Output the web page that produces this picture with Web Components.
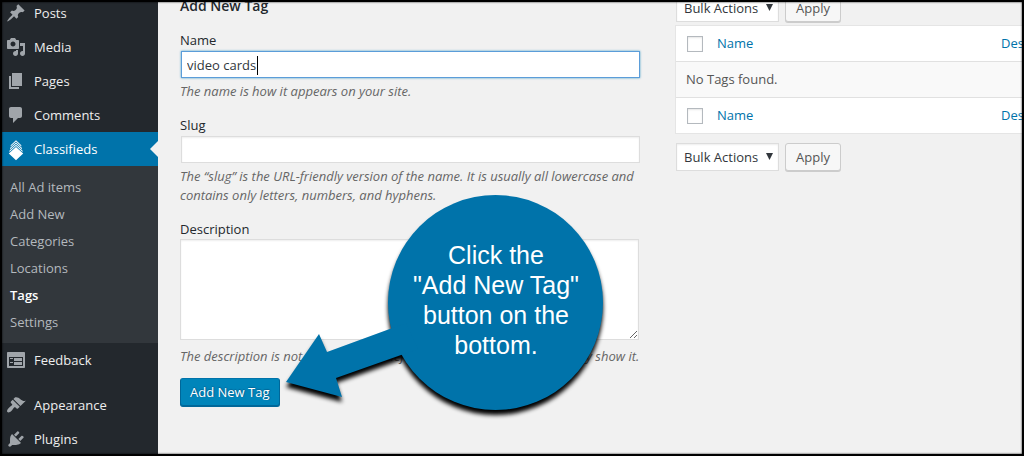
<!DOCTYPE html>
<html lang="en">
<head>
<meta charset="utf-8">
<title>Classifieds Tags</title>
<style>
  body { margin: 0; background: #f1f1f1; color: #444; font: 13px/19px "Open Sans", "Noto Sans", sans-serif; }
</style>
</head>
<body>
<admin-page></admin-page>

<script>
const define = (name, html, setup) => {
  const template = document.createElement('template');
  template.innerHTML = html;
  customElements.define(name, class extends HTMLElement {
    constructor() {
      super();
      this.attachShadow({ mode: 'open' }).append(template.content.cloneNode(true));
    }
    connectedCallback() { if (setup) setup(this, this.shadowRoot); }
  });
};

const ICONS = {
  post: 'M10.44 3.02l1.82-1.82 6.36 6.35-1.83 1.82c-1.05-.68-2.48-.57-3.41.36l-.75.75c-.92.93-1.04 2.35-.35 3.41l-1.83 1.82-2.41-2.41-2.8 2.79c-.42.42-3.38 2.71-3.8 2.29s1.86-3.39 2.28-3.81l2.79-2.79L4.1 9.36l1.83-1.82c1.05.69 2.48.57 3.4-.36l.75-.75c.93-.92 1.05-2.35.36-3.41z',
  media: 'M13 11V4c0-.55-.45-1-1-1h-1.67L9 1H5L3.67 3H2c-.55 0-1 .45-1 1v7c0 .55.45 1 1 1h10c.55 0 1-.45 1-1zM7 4.5c1.38 0 2.5 1.12 2.5 2.5S8.38 9.5 7 9.5 4.5 8.38 4.5 7 5.62 4.5 7 4.5zM14 6h5v10.5c0 1.38-1.12 2.5-2.5 2.5S14 17.88 14 16.5s1.12-2.5 2.5-2.5c.17 0 .34.02.5.05V9h-3V6zM10 14.05V13h2v3.5c0 1.38-1.12 2.5-2.5 2.5S7 17.88 7 16.5 8.12 14 9.5 14c.17 0 .34.02.5.05z',
  page: 'M6 15V2h10v13H6zm-1 1h8v2H3V5h2v11z',
  comments: 'M5 2h9c1.1 0 2 .9 2 2v7c0 1.1-.9 2-2 2h-2l-5 5v-5H5c-1.1 0-2-.9-2-2V4c0-1.1.9-2 2-2z',
  stack: 'M10 8L17.2 14.5 10 21.3 2.8 14.5zM10 5.7L16.6 11.7V12.9L10 7 3.4 12.9V11.7zM10 3.5L16 9V10.2L10 4.8 4 10.2V9zM10 1.3L15.3 6.2V7.4L10 2.6 4.7 7.4V6.2z',
  feedback: 'M2 2h16c.55 0 1 .45 1 1v14c0 .55-.45 1-1 1H2c-.55 0-1-.45-1-1V3c0-.55.45-1 1-1zm15 14V7H3v9h14zM4 8v1h3V8H4zm4 0v3h8V8H8zm-4 4v1h3v-1H4zm4 0v3h8v-3H8z',
  appearance: 'M14.48 11.06L7.41 3.99l1.5-1.5c.5-.56 2.3-.47 3.51.32 1.21.8 1.43 1.28 2.91 2.1 1.18.64 2.45 1.26 4.45.85zm-.71.71L6.7 4.7 4.93 6.47c-.39.39-.39 1.02 0 1.41l1.06 1.06c.39.39.39 1.03 0 1.42-.6.6-1.43 1.11-2.21 1.69-.35.26-.7.53-1.01.84C1.43 14.23.4 16.08 1.4 17.07c.99 1 2.84-.03 4.18-1.36.31-.31.58-.66.85-1.02.57-.78 1.08-1.61 1.69-2.21.39-.39 1.02-.39 1.41 0l1.06 1.06c.39.39 1.02.39 1.41 0z',
  plugins: 'M13.11 4.36L9.87 7.6 8 5.73l3.24-3.24c.35-.34 1.05-.2 1.56.32.52.51.66 1.21.31 1.55zm-8 1.77l.91-1.12 9.01 9.01-1.19.84c-.71.71-2.63 1.16-3.82 1.16H6.14L4.9 17.26c-.59.59-1.54.59-2.12 0-.59-.58-.59-1.53 0-2.12l1.24-1.24v-3.88c0-1.13.4-3.19 1.09-3.89zm7.26 3.97l3.24-3.24c.34-.35 1.04-.21 1.55.31.52.51.66 1.21.31 1.55l-3.24 3.25z'
};

/* One top-level entry of the side menu. */
define('menu-item', `
  <style>
    :host { display: block; position: relative; --icon: #a0a5aa; }
    :host([current]) { background: #0073aa; --icon: #fff; }
    :host([current])::after {
      content: ""; position: absolute; right: 0; top: 9px;
      border: 8px solid transparent; border-right-color: #f1f1f1; border-left: 0;
    }
    a { display: flex; align-items: center; gap: 8px; height: 34px; padding-left: 6px; color: #eee; text-decoration: none; }
    :host([current]) a { color: #fff; }
    svg { width: 20px; height: 20px; fill: var(--icon); overflow: visible; }
  </style>
  <a href="#"><svg viewBox="0 0 20 20" aria-hidden="true"><path/></svg><slot></slot></a>`,
  (host, root) => root.querySelector('path').setAttribute('d', ICONS[host.getAttribute('icon')]));

/* One entry of the open submenu. */
define('submenu-item', `
  <style>
    :host { display: block; }
    a { display: block; padding-left: 10px; line-height: 27px; color: #b4b9be; text-decoration: none; }
    :host([current]) a { color: #fff; font-weight: 600; }
  </style>
  <a href="#"><slot></slot></a>`);

define('side-menu', `
  <style>
    :host { display: block; background: #23282d; padding-top: 4px; }
    .submenu { background: #32373c; padding: 8px 0 7px; }
    .separated { margin-top: 11px; }
  </style>
  <nav>
    <menu-item icon="post">Posts</menu-item>
    <menu-item icon="media">Media</menu-item>
    <menu-item icon="page">Pages</menu-item>
    <menu-item icon="comments">Comments</menu-item>
    <menu-item icon="stack" current>Classifieds</menu-item>
    <div class="submenu">
      <submenu-item>All Ad items</submenu-item>
      <submenu-item>Add New</submenu-item>
      <submenu-item>Categories</submenu-item>
      <submenu-item>Locations</submenu-item>
      <submenu-item current>Tags</submenu-item>
      <submenu-item>Settings</submenu-item>
    </div>
    <menu-item icon="feedback">Feedback</menu-item>
    <menu-item icon="appearance" class="separated">Appearance</menu-item>
    <menu-item icon="plugins">Plugins</menu-item>
  </nav>`);

define('tag-form', `
  <style>
    :host { display: block; }
    h2 { margin: 0 0 11px; font-size: 14px; line-height: 28px; font-weight: 600; color: #23282d; }
    .field { margin-bottom: 15px; }
    label { display: block; line-height: 18px; color: #23282d; }
    input, textarea {
      display: block; box-sizing: border-box; border: 1px solid #ddd; border-radius: 0; outline: 0;
      background: #fff; box-shadow: inset 0 1px 2px rgba(0,0,0,.07); color: #32373c;
      font: inherit;
    }
    input { width: calc(100% - 1px); height: 27px; margin: 2px 0 0 1px; padding: 3px 5px; }
    .active {
      border-color: #5b9dd9; box-shadow: 0 0 2px rgba(30,140,190,.8);
      background: linear-gradient(#000, #000) 75px 4px / 1px 19px no-repeat #fff; caret-color: transparent;
    }
    textarea { width: calc(100% - 1px); height: 101px; margin-top: 1px; resize: vertical; }
    p { margin: 4px 0 0; color: #666; font-style: italic; }
    textarea + p { margin-top: 7px; }
    .field:last-of-type { margin-bottom: 12px; }
    button {
      height: 29px; padding: 0 9px; border: 1px solid #006799; border-top-color: #0073aa; border-radius: 3px;
      background: #0085ba; box-shadow: inset 0 -1px 0 #006799; color: #fff; font: inherit;
      text-shadow: 0 -1px 1px #006799, 1px 0 1px #006799;
    }
  </style>
  <form>
    <h2>Add New Tag</h2>
    <div class="field">
      <label for="name">Name</label>
      <input id="name" class="active" type="text" value="video cards">
      <p>The name is how it appears on your site.</p>
    </div>
    <div class="field">
      <label for="slug">Slug</label>
      <input id="slug" type="text">
      <p>The “slug” is the URL-friendly version of the name. It is usually all lowercase and contains only letters, numbers, and hyphens.</p>
    </div>
    <div class="field">
      <label for="description">Description</label>
      <textarea id="description"></textarea>
      <p>The description is not prominent by default; however, some themes may show it.</p>
    </div>
    <button type="button">Add New Tag</button>
  </form>`);

define('bulk-actions', `
  <style>
    :host { display: flex; align-items: flex-start; gap: 6px; padding-left: 1px; }
    select {
      appearance: none; box-sizing: border-box; width: 103px; height: 28px; margin: 0; padding: 0 0 0 7px;
      border: 1px solid #ddd; border-radius: 0; color: #32373c; font: inherit;
      background: #fff url("data:image/svg+xml,%3Csvg xmlns='http://www.w3.org/2000/svg' width='7' height='7'%3E%3Cpath d='M0 0h7L3.5 7z' fill='%2332373c'/%3E%3C/svg%3E") right 5px top 9px no-repeat;
      box-shadow: inset 0 1px 2px rgba(0,0,0,.07);
    }
    button {
      height: 28px; padding: 0 10px; border: 1px solid #ccc; border-radius: 3px; background: #f7f7f7;
      box-shadow: 0 1px 0 #ccc; color: #555; font: inherit;
    }
  </style>
  <select aria-label="Bulk Actions"><option>Bulk Actions</option></select>
  <button type="button">Apply</button>`);

define('tag-table', `
  <style>
    :host { display: block; overflow: hidden; }
    table {
      width: calc(100% + 80px); table-layout: fixed; border-collapse: separate; border-spacing: 0;
      border: 1px solid #e5e5e5; background: #fff;
    }
    th, td { box-sizing: border-box; height: 36px; padding: 0; text-align: left; font-weight: 400; }
    thead th { border-bottom: 1px solid #e1e1e1; }
    tfoot th { border-top: 1px solid #e1e1e1; }
    .check { width: 41px; }
    .desc { width: 102px; }
    td { height: 35px; padding-left: 10px; background: #f9f9f9; color: #555; }
    a { color: #0073aa; text-decoration: none; }
    input {
      appearance: none; display: block; box-sizing: border-box; width: 16px; height: 16px; margin: 0 0 0 11px;
      border: 1px solid #b4b9be; background: #fff; box-shadow: inset 0 1px 2px rgba(0,0,0,.1);
    }
  </style>
  <table>
    <thead><tr>
      <th class="check"><input type="checkbox" aria-label="Select all"></th>
      <th><a href="#">Name</a></th>
      <th class="desc"><a href="#">Description</a></th>
    </tr></thead>
    <tbody><tr><td colspan="3">No Tags found.</td></tr></tbody>
    <tfoot><tr>
      <th class="check"><input type="checkbox" aria-label="Select all"></th>
      <th><a href="#">Name</a></th>
      <th class="desc"><a href="#">Description</a></th>
    </tr></tfoot>
  </table>`);

/* Round callout with an arrow, laid over the page. */
define('callout-bubble', `
  <style>
    :host { display: block; position: absolute; left: 286px; top: 195px; width: 318px; height: 216px; }
    svg { display: block; width: 318px; height: 216px; overflow: visible; fill: #0073aa; filter: drop-shadow(0 5px 2px #000); }
    p {
      position: absolute; right: 0; top: 0; width: 216px; height: 216px; margin: 0; box-sizing: border-box; padding-bottom: 6px;
      display: flex; flex-direction: column; justify-content: center; text-align: center;
      color: #fff; font: 25px/30px "Liberation Sans", Arial, sans-serif;
    }
  </style>
  <svg viewBox="0 0 318 216" aria-hidden="true">
    <circle cx="209.5" cy="107.5" r="107.5"/>
    <path d="M0 187L33 139 41 157 120 128 132 154 50 183 56 202z"/>
  </svg>
  <p><slot></slot></p>`);

define('admin-page', `
  <style>
    :host { display: block; position: relative; overflow: hidden; min-height: 100vh; }
    .columns {
      display: grid; grid-template-columns: 158px minmax(0, 517fr) minmax(0, 349fr);
      margin-top: -8px; min-height: calc(100vh + 8px);
    }
    main { display: contents; }
    .form { padding: 0 35px 0 22px; }
    .list { padding-top: 2px; }
    tag-table { margin: 3px 0 9px; }
    .frame { position: absolute; inset: 0; border: 2px solid #000; box-shadow: inset 0 0 2px #000; pointer-events: none; }
  </style>
  <div class="columns">
    <side-menu></side-menu>
    <main>
      <div class="form"><tag-form></tag-form></div>
      <div class="list">
        <bulk-actions></bulk-actions>
        <tag-table></tag-table>
        <bulk-actions></bulk-actions>
      </div>
    </main>
  </div>
  <callout-bubble>Click the<br>"Add New Tag"<br>button on the<br>bottom.</callout-bubble>
  <div class="frame"></div>`);
</script>
</body>
</html>
